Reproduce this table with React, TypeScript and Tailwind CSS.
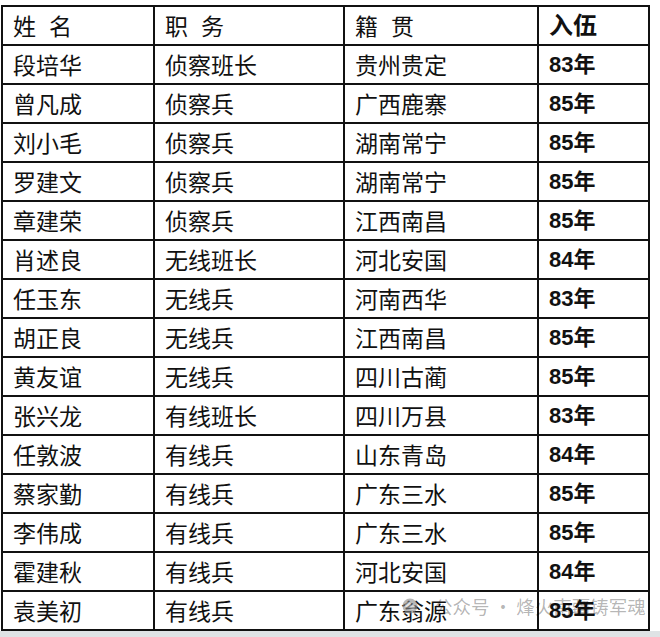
import React from 'react';

interface Row {
  name: string;
  duty: string;
  home: string;
  year: string;
}

const rows: Row[] = [
  { name: '段培华', duty: '侦察班长', home: '贵州贵定', year: '83' },
  { name: '曾凡成', duty: '侦察兵', home: '广西鹿寨', year: '85' },
  { name: '刘小毛', duty: '侦察兵', home: '湖南常宁', year: '85' },
  { name: '罗建文', duty: '侦察兵', home: '湖南常宁', year: '85' },
  { name: '章建荣', duty: '侦察兵', home: '江西南昌', year: '85' },
  { name: '肖述良', duty: '无线班长', home: '河北安国', year: '84' },
  { name: '任玉东', duty: '无线兵', home: '河南西华', year: '83' },
  { name: '胡正良', duty: '无线兵', home: '江西南昌', year: '85' },
  { name: '黄友谊', duty: '无线兵', home: '四川古蔺', year: '85' },
  { name: '张兴龙', duty: '有线班长', home: '四川万县', year: '83' },
  { name: '任敦波', duty: '有线兵', home: '山东青岛', year: '84' },
  { name: '蔡家勤', duty: '有线兵', home: '广东三水', year: '85' },
  { name: '李伟成', duty: '有线兵', home: '广东三水', year: '85' },
  { name: '霍建秋', duty: '有线兵', home: '河北安国', year: '84' },
  { name: '袁美初', duty: '有线兵', home: '广东翁源', year: '85' },
];

const cjk = "font-['Noto_Sans_CJK_SC',sans-serif]";
const bold = "font-['Liberation_Sans','Noto_Sans_CJK_SC',sans-serif] font-bold";
const cell = 'border-2 border-[#111] h-[39px] p-0 pl-[10px] text-left align-middle';

const App: React.FC = () => {
  return (
    <div className="relative w-[660px] h-[637px] bg-white overflow-hidden">
      <div className="pt-[5px] pl-[1px]">
        <table className="border-collapse table-fixed w-[647px] text-[#111]">
          <colgroup>
            <col className="w-[152px]" />
            <col className="w-[190px]" />
            <col className="w-[194px]" />
            <col className="w-[111px]" />
          </colgroup>
          <thead>
            <tr>
              <th className={`${cell} ${cjk} font-normal text-[23px]`}>
                <span className="mr-[13px]">姓</span>名
              </th>
              <th className={`${cell} ${cjk} font-normal text-[23px]`}>
                <span className="mr-[13px]">职</span>务
              </th>
              <th className={`${cell} ${cjk} font-normal text-[23px]`}>
                <span className="mr-[13px]">籍</span>贯
              </th>
              <th className={`${cell} ${bold} text-[24px]`}>入伍</th>
            </tr>
          </thead>
          <tbody>
            {rows.map((r) => (
              <tr key={r.name}>
                <td className={`${cell} ${cjk} text-[23px]`}>{r.name}</td>
                <td className={`${cell} ${cjk} text-[23px]`}>{r.duty}</td>
                <td className={`${cell} ${cjk} text-[23px]`}>{r.home}</td>
                <td className={`${cell} ${bold} text-[22px]`}>{r.year}年</td>
              </tr>
            ))}
          </tbody>
        </table>
      </div>

      {/* bottom strip of the photo */}
      <div className="absolute left-0 bottom-0 w-full h-[6px] bg-[#dfe3e5]" />

      {/* watermark */}
      <div className="absolute left-[402px] top-[597px] flex items-center gap-[3px] pointer-events-none">
        <svg width="16" height="16" viewBox="0 0 16 16" className="opacity-60">
          <circle cx="8" cy="8" r="7.5" fill="#8a8a8a" />
          <circle cx="6" cy="7" r="3" fill="#d0d0d0" />
          <circle cx="10.5" cy="9.5" r="2.3" fill="#c0c0c0" />
        </svg>
        <span className="font-['Noto_Sans_CJK_SC',sans-serif] text-[18.5px] leading-none text-[#000]/30 ml-[13px] whitespace-nowrap">
          公众号 · 烽火南疆铸军魂
        </span>
      </div>
    </div>
  );
};

export default App;
